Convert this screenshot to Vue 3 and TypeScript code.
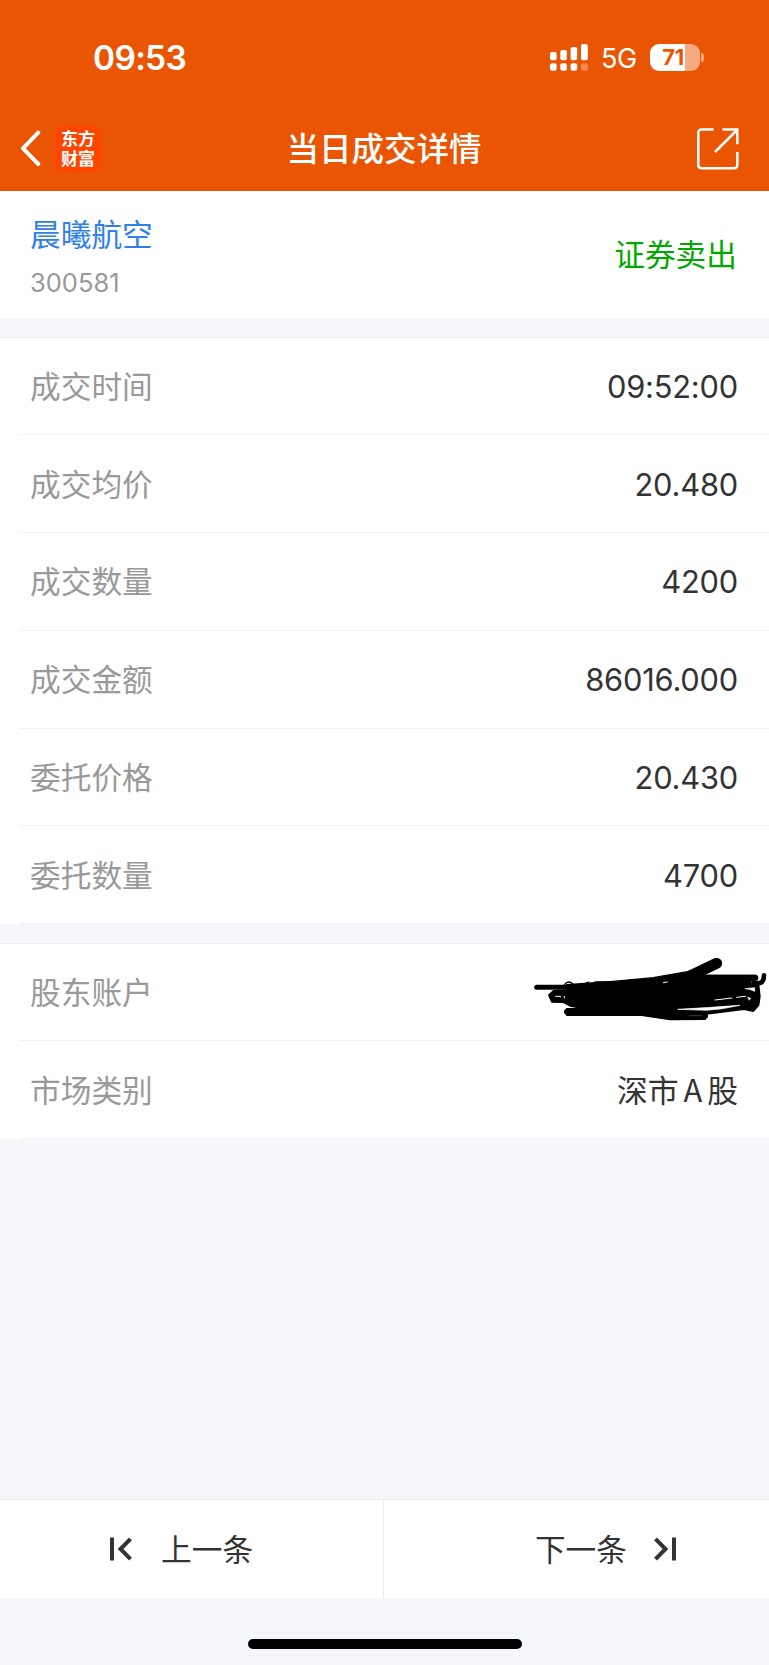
<script setup lang="ts">
interface Row {
  label: string
  value: string
  redacted?: boolean
}

const tradeRows: Row[] = [
  { label: '成交时间', value: '09:52:00' },
  { label: '成交均价', value: '20.480' },
  { label: '成交数量', value: '4200' },
  { label: '成交金额', value: '86016.000' },
  { label: '委托价格', value: '20.430' },
  { label: '委托数量', value: '4700' },
]

const accountRows: Row[] = [
  { label: '股东账户', value: '', redacted: true },
  { label: '市场类别', value: '深市 A 股' },
]
</script>

<template>
  <div class="screen">
    <header class="header">
      <div class="status">
        <span class="clock">09:53</span>
        <div class="indicators">
          <svg class="signal" width="38" height="27" viewBox="0 0 38 27" fill="#fff">
            <rect x="0" y="8" width="6.6" height="8.2" rx="2" />
            <rect x="10.3" y="6" width="6.6" height="10.2" rx="2" />
            <rect x="20.6" y="3" width="6.6" height="13.2" rx="2" />
            <rect x="31" y="0" width="6.8" height="16.2" rx="2" />
            <rect x="0" y="19.3" width="6.6" height="7.4" rx="2" />
            <rect x="10.3" y="19.3" width="6.6" height="7.4" rx="2" />
            <rect x="20.6" y="19.3" width="6.6" height="7.4" rx="2" />
            <rect x="31" y="19.3" width="6.8" height="7.4" rx="2" opacity=".3" />
          </svg>
          <span class="network">5G</span>
          <div class="battery"><span class="level">71</span></div>
          <i class="nub"></i>
        </div>
      </div>
      <nav class="nav">
        <div class="nav-left">
          <svg width="22" height="38" viewBox="0 0 22 38" fill="none" stroke="#fff" stroke-width="4" stroke-linecap="round" stroke-linejoin="round">
            <path d="M18.2 2.6 3 18.4 18.2 34" />
          </svg>
          <div class="logo"><span>东方</span><span>财富</span></div>
        </div>
        <h1 class="title">当日成交详情</h1>
        <svg class="share" width="42" height="42" viewBox="0 0 42 42" fill="none" stroke="#fff" stroke-width="2.5">
          <path d="M16.6 1.5H4.3A3 3 0 0 0 1.3 4.5V37.3A3 3 0 0 0 4.3 40.3H37.3A3 3 0 0 0 40.3 37.3V24" />
          <path d="M25.4 1.5H40.3V16.2M40 2 18 24" />
        </svg>
      </nav>
    </header>

    <section class="summary">
      <div>
        <div class="stock">晨曦航空</div>
        <div class="code">300581</div>
      </div>
      <div class="side">证券卖出</div>
    </section>

    <section class="group">
      <div v-for="row in tradeRows" :key="row.label" class="row">
        <span class="label">{{ row.label }}</span>
        <span class="value">{{ row.value }}</span>
      </div>
    </section>

    <section class="group">
      <div v-for="row in accountRows" :key="row.label" class="row">
        <span class="label">{{ row.label }}</span>
        <span v-if="!row.redacted" class="value cjk">{{ row.value }}</span>
        <svg v-else class="scribble" width="249" height="90" viewBox="0 0 747 270" fill="none" stroke="#000" stroke-linecap="round" stroke-linejoin="round">
          <path d="M50 142H165" stroke-width="15" />
          <path d="M512 107 590 70" stroke-width="33" />
          <path d="M140 134 280 124 400 113 520 92 560 106H708V120H692V134H716L720 170 716 196 700 214 672 208 560 222 556 238 450 239 365 226H140V206H190L150 198 130 187 95 186 86 165 100 152 140 150Z" fill="#000" stroke-width="4" />
          <path d="M560 113H706M141 215H370Q450 231 555 228" stroke-width="18" />
          <path d="M700 129H712Q732 132 732 106" stroke-width="14" />
          <path d="M133 134Q147 118 161 134M198 129 206 126M225 126H260" stroke-width="4" />
          <path d="M585 180 636 174M650 172 676 169M107 169H122M133 169V174M430 128 442 126" stroke="#fff" stroke-width="3" />
          <path d="M474 208Q560 203 660 196Q610 208 560 211Z" fill="#fff" stroke="#fff" stroke-width="2" />
          <path d="M676 146 704 143V154Q690 147 676 146ZM684 172 692 175 688 180Z" fill="#fff" stroke="#fff" stroke-width="2" />
          <path d="M508 227H545" stroke="#555" stroke-width="2" />
        </svg>
      </div>
    </section>

    <footer class="footer">
      <button class="pager prev">
        <svg width="22" height="24" viewBox="0 0 22 24" fill="none" stroke="#333" stroke-width="4">
          <path d="M2 .5V23.5M20.5 1.8 10.5 12 20.5 22.2" />
        </svg>
        <span>上一条</span>
      </button>
      <button class="pager next">
        <span>下一条</span>
        <svg width="22" height="24" viewBox="0 0 22 24" fill="none" stroke="#333" stroke-width="4">
          <path d="M20 .5V23.5M1.5 1.8 11.5 12 1.5 22.2" />
        </svg>
      </button>
    </footer>
    <div class="home"><i></i></div>
  </div>
</template>

<style>
body {
  background: #f6f7fa;
}
</style>

<style scoped>
.screen {
  width: 769px;
  height: 1665px;
  display: flex;
  flex-direction: column;
  overflow: hidden;
  background: #f6f7fa;
  color: #333;
  font-family: Inter, 'Noto Sans CJK SC', sans-serif;
}
.header {
  flex: none;
  height: 191px;
  background: #ea5504;
  color: #fff;
}
.status {
  display: flex;
  justify-content: space-between;
  align-items: center;
  height: 115px;
  padding: 0 65px 0 93px;
  box-sizing: border-box;
}
.clock {
  font-size: 33.5px;
  font-weight: 600;
  line-height: 40px;
  letter-spacing: -0.7px;
}
.indicators {
  display: flex;
  align-items: center;
}
.network {
  width: 36px;
  margin-left: 13px;
  padding-top: 2px;
  font-size: 27px;
  line-height: 30px;
  letter-spacing: -0.5px;
  white-space: nowrap;
}
.battery {
  width: 50px;
  height: 27px;
  margin-left: 12.5px;
  border-radius: 9px;
  background: linear-gradient(90deg, #fff 35px, #f5aa81 35px);
}
.level {
  display: block;
  width: 47px;
  color: #ea5504;
  font-size: 22px;
  font-weight: 700;
  line-height: 27px;
  letter-spacing: -0.5px;
  text-align: center;
}
.nub {
  width: 3px;
  height: 9px;
  margin-left: 1.5px;
  border-radius: 0 4px 4px 0;
  background: #f5aa81;
}
.nav {
  display: grid;
  grid-template-columns: 1fr auto 1fr;
  align-items: center;
  height: 67px;
  padding: 0 30px 0 20px;
}
.nav-left {
  display: flex;
  align-items: center;
  gap: 13px;
}
.logo {
  width: 46px;
  height: 46px;
  box-sizing: border-box;
  padding-top: 2px;
  border-radius: 8px;
  background: #ff4500;
  font: 700 17px/20px 'Noto Sans CJK SC', sans-serif;
  text-align: center;
}
.logo span {
  display: block;
}
.title {
  margin: 0;
  padding: 0 0 4px 9px;
  font: 500 32.5px/48px 'Noto Sans CJK SC', sans-serif;
}
.share {
  justify-self: end;
}
.summary {
  flex: none;
  display: flex;
  justify-content: space-between;
  align-items: center;
  height: 127px;
  box-sizing: border-box;
  padding: 2px 32px 0 30px;
  background: #fff;
}
.stock,
.side,
.label {
  font: 400 30.7px/46px 'Noto Sans CJK SC', sans-serif;
}
.stock {
  color: #3080e8;
}
.code {
  margin-top: 8px;
  color: #999;
  font-size: 25.5px;
  line-height: 38px;
}
.side {
  padding-bottom: 6px;
  color: #00a800;
}
.group {
  flex: none;
  margin-top: 18.5px;
  border-top: 1px solid #eceef0;
  background: #fff;
}
.row {
  position: relative;
  display: flex;
  align-items: center;
  justify-content: space-between;
  height: 97.75px;
  box-sizing: border-box;
  padding: 0 31px 0 30px;
  background: linear-gradient(#f1f2f4, #f1f2f4) 20px 100% / 100% 1px no-repeat;
}
.label {
  padding-bottom: 3px;
  color: #999;
}
.value {
  padding-top: 1px;
  font-size: 30.8px;
  line-height: 46px;
  letter-spacing: -0.2px;
}
.cjk {
  padding: 0 0 3px;
  font-family: 'Noto Sans CJK SC', sans-serif;
  letter-spacing: 0;
  word-spacing: -2px;
}
.scribble {
  position: absolute;
  top: -4px;
  right: 0;
}
.footer {
  flex: none;
  display: grid;
  grid-template-columns: 384px 385px;
  height: 99px;
  box-sizing: border-box;
  margin-top: auto;
  border-top: 1px solid #ebecee;
  background: #fff;
}
.pager {
  display: flex;
  align-items: center;
  gap: 29px;
  padding: 0;
  border: 0;
  background: none;
  color: #333;
  font: 400 30.7px/46px 'Noto Sans CJK SC', sans-serif;
}
.pager span {
  padding-bottom: 3px;
}
.prev {
  padding-left: 110px;
  border-right: 1px solid #ebecee;
}
.next {
  justify-content: flex-end;
  gap: 27px;
  padding-right: 93px;
}
.home {
  flex: none;
  display: flex;
  justify-content: center;
  height: 67px;
}
.home i {
  width: 274px;
  height: 10px;
  margin-top: 41px;
  border-radius: 5px;
  background: #000;
}
</style>
